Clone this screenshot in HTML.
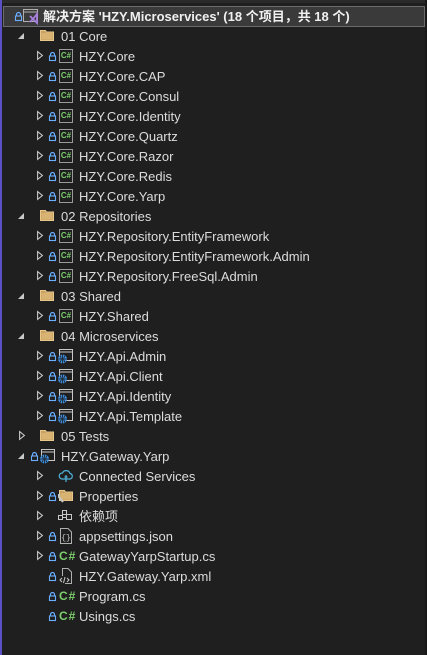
<!DOCTYPE html><html><head><meta charset="utf-8"><style>
body{margin:0;width:427px;height:655px;background:#1f1f1f;overflow:hidden;position:relative;font-family:"Segoe UI","Liberation Sans","Noto Sans CJK SC",sans-serif;font-size:13px;color:#dcdcdc}
svg{overflow:visible}
.lb{position:absolute;left:0;top:0;width:2px;height:655px;background:#5a4fc4}
.tb{position:absolute;left:2px;top:0;width:425px;height:3px;background:#2a2a2a}
.rb{position:absolute;right:0;top:0;width:2px;height:655px;background:#181818}
.r{position:absolute;left:0;height:20px;width:427px}
.sel{position:absolute;left:3px;top:6px;width:420px;height:19px;border:1px solid #6b6b6b;background:#3a3a3a}
.t{position:absolute;top:3px;white-space:nowrap;line-height:16px}
.ex{position:absolute;top:7px;width:0;height:0;border-left:6px solid transparent;border-bottom:6px solid #c8c8c8}
.co{position:absolute;top:5px;width:6px;height:9px}
.lk{position:absolute;top:6px;width:7px;height:9px}
.cs{position:absolute;top:3px;width:12px;height:12px;border:1px solid #9a9a9a;background:#1f1f1f;color:#7ccf6c;font-size:8px;font-weight:bold;line-height:12px;text-align:center;font-family:"Liberation Sans",sans-serif}
.fo{position:absolute;top:4px;width:14px;height:11px}
.wb{position:absolute;left:57px;top:2px;width:16px;height:16px}
.csn{position:absolute;top:3px;color:#7ccf6c;font-weight:bold;font-size:12px;font-family:"Liberation Sans",sans-serif;letter-spacing:1px}
</style></head><body>
<div class="lb"></div><div class="tb"></div><div class="rb"></div>
<div class="sel"></div>
<svg width="0" height="0" style="position:absolute"><defs>
<g id="lock"><path d="M1.5 4V2.5a2 2 0 0 1 4 0V4" fill="none" stroke="#6aaeff" stroke-width="1.2"/><rect x="0.5" y="4" width="6" height="4.5" fill="none" stroke="#6aaeff" stroke-width="1.1"/></g>
<g id="co"><path d="M0.6 0.6L5.4 4.5L0.6 8.4Z" fill="none" stroke="#c8c8c8" stroke-width="1.1"/></g>
<g id="fold"><path d="M0.5 0.5H5.5L6.5 2H13.5V10.5H0.5Z" fill="#c9a063" stroke="#e8c88c" stroke-width="1"/><rect x="1.5" y="3" width="11" height="6.5" fill="#d9b372"/></g>
<g id="web"><rect x="2.5" y="1.5" width="13" height="11" fill="#1f1f1f" stroke="#c8c8c8"/><line x1="2.5" y1="4" x2="15.5" y2="4" stroke="#c8c8c8"/><circle cx="5.5" cy="11" r="4.5" fill="#3b8ee0"/><path d="M1 11H10M5.5 6.5V15.5M3 7.5Q5.5 11 3 14.5M8 7.5Q5.5 11 8 14.5" stroke="#1f1f1f" stroke-width="0.8" fill="none"/></g>
</defs></svg>
<div class="r" style="top:6px"><svg class="lk" style="left:15px"><use href="#lock"/></svg>
<svg style="position:absolute;left:23px;top:2px" width="16" height="16" viewBox="0 0 16 16"><rect x="0.5" y="1.5" width="14" height="12" fill="none" stroke="#b0b0b0"/><line x1="0.5" y1="4" x2="14.5" y2="4" stroke="#b0b0b0"/><path d="M7 8L10 11L14 6V15L10 11L7 14" fill="none" stroke="#a77fe0" stroke-width="1.8"/></svg>
<span class="t" style="left:43px;font-weight:bold;color:#f0f0f0">解决方案 'HZY.Microservices' (18 个项目，共 18 个)</span></div>

<div class="r" style="top:26px"><span class="ex" style="left:18px"></span><svg class="fo" style="left:40px"><use href="#fold"/></svg><span class="t" style="left:61px">01 Core</span></div>
<div class="r" style="top:46px"><svg class="co" style="left:37px"><use href="#co"/></svg><svg class="lk" style="left:49px"><use href="#lock"/></svg><span class="cs" style="left:59px">C#</span><span class="t" style="left:79px">HZY.Core</span></div>
<div class="r" style="top:66px"><svg class="co" style="left:37px"><use href="#co"/></svg><svg class="lk" style="left:49px"><use href="#lock"/></svg><span class="cs" style="left:59px">C#</span><span class="t" style="left:79px">HZY.Core.CAP</span></div>
<div class="r" style="top:86px"><svg class="co" style="left:37px"><use href="#co"/></svg><svg class="lk" style="left:49px"><use href="#lock"/></svg><span class="cs" style="left:59px">C#</span><span class="t" style="left:79px">HZY.Core.Consul</span></div>
<div class="r" style="top:106px"><svg class="co" style="left:37px"><use href="#co"/></svg><svg class="lk" style="left:49px"><use href="#lock"/></svg><span class="cs" style="left:59px">C#</span><span class="t" style="left:79px">HZY.Core.Identity</span></div>
<div class="r" style="top:126px"><svg class="co" style="left:37px"><use href="#co"/></svg><svg class="lk" style="left:49px"><use href="#lock"/></svg><span class="cs" style="left:59px">C#</span><span class="t" style="left:79px">HZY.Core.Quartz</span></div>
<div class="r" style="top:146px"><svg class="co" style="left:37px"><use href="#co"/></svg><svg class="lk" style="left:49px"><use href="#lock"/></svg><span class="cs" style="left:59px">C#</span><span class="t" style="left:79px">HZY.Core.Razor</span></div>
<div class="r" style="top:166px"><svg class="co" style="left:37px"><use href="#co"/></svg><svg class="lk" style="left:49px"><use href="#lock"/></svg><span class="cs" style="left:59px">C#</span><span class="t" style="left:79px">HZY.Core.Redis</span></div>
<div class="r" style="top:186px"><svg class="co" style="left:37px"><use href="#co"/></svg><svg class="lk" style="left:49px"><use href="#lock"/></svg><span class="cs" style="left:59px">C#</span><span class="t" style="left:79px">HZY.Core.Yarp</span></div>

<div class="r" style="top:206px"><span class="ex" style="left:18px"></span><svg class="fo" style="left:40px"><use href="#fold"/></svg><span class="t" style="left:61px">02 Repositories</span></div>
<div class="r" style="top:226px"><svg class="co" style="left:37px"><use href="#co"/></svg><svg class="lk" style="left:49px"><use href="#lock"/></svg><span class="cs" style="left:59px">C#</span><span class="t" style="left:79px">HZY.Repository.EntityFramework</span></div>
<div class="r" style="top:246px"><svg class="co" style="left:37px"><use href="#co"/></svg><svg class="lk" style="left:49px"><use href="#lock"/></svg><span class="cs" style="left:59px">C#</span><span class="t" style="left:79px">HZY.Repository.EntityFramework.Admin</span></div>
<div class="r" style="top:266px"><svg class="co" style="left:37px"><use href="#co"/></svg><svg class="lk" style="left:49px"><use href="#lock"/></svg><span class="cs" style="left:59px">C#</span><span class="t" style="left:79px">HZY.Repository.FreeSql.Admin</span></div>

<div class="r" style="top:286px"><span class="ex" style="left:18px"></span><svg class="fo" style="left:40px"><use href="#fold"/></svg><span class="t" style="left:61px">03 Shared</span></div>
<div class="r" style="top:306px"><svg class="co" style="left:37px"><use href="#co"/></svg><svg class="lk" style="left:49px"><use href="#lock"/></svg><span class="cs" style="left:59px">C#</span><span class="t" style="left:79px">HZY.Shared</span></div>

<div class="r" style="top:326px"><span class="ex" style="left:18px"></span><svg class="fo" style="left:40px"><use href="#fold"/></svg><span class="t" style="left:61px">04 Microservices</span></div>
<div class="r" style="top:346px"><svg class="co" style="left:37px"><use href="#co"/></svg><svg class="lk" style="left:49px"><use href="#lock"/></svg><svg class="wb"><use href="#web"/></svg><span class="t" style="left:79px">HZY.Api.Admin</span></div>
<div class="r" style="top:366px"><svg class="co" style="left:37px"><use href="#co"/></svg><svg class="lk" style="left:49px"><use href="#lock"/></svg><svg class="wb"><use href="#web"/></svg><span class="t" style="left:79px">HZY.Api.Client</span></div>
<div class="r" style="top:386px"><svg class="co" style="left:37px"><use href="#co"/></svg><svg class="lk" style="left:49px"><use href="#lock"/></svg><svg class="wb"><use href="#web"/></svg><span class="t" style="left:79px">HZY.Api.Identity</span></div>
<div class="r" style="top:406px"><svg class="co" style="left:37px"><use href="#co"/></svg><svg class="lk" style="left:49px"><use href="#lock"/></svg><svg class="wb"><use href="#web"/></svg><span class="t" style="left:79px">HZY.Api.Template</span></div>

<div class="r" style="top:426px"><svg class="co" style="left:19px"><use href="#co"/></svg><svg class="fo" style="left:40px"><use href="#fold"/></svg><span class="t" style="left:61px">05 Tests</span></div>

<div class="r" style="top:446px"><span class="ex" style="left:18px"></span><svg class="lk" style="left:31px"><use href="#lock"/></svg><svg class="wb" style="left:39px"><use href="#web"/></svg><span class="t" style="left:61px">HZY.Gateway.Yarp</span></div>
<div class="r" style="top:466px"><svg class="co" style="left:37px"><use href="#co"/></svg><svg style="position:absolute;left:58px;top:3px" width="16" height="14" viewBox="0 0 16 14"><path d="M4 10A3 3 0 0 1 4.5 4A4 4 0 0 1 12 4.5A2.8 2.8 0 0 1 12 10Z" fill="none" stroke="#4fb3d9" stroke-width="1.2"/><path d="M8 6V13M6.5 8H9.5" stroke="#4fb3d9" stroke-width="1.2"/></svg><span class="t" style="left:79px">Connected Services</span></div>
<div class="r" style="top:486px"><svg class="co" style="left:37px"><use href="#co"/></svg><svg class="lk" style="left:49px"><use href="#lock"/></svg><svg class="fo" style="left:59px"><use href="#fold"/></svg><svg style="position:absolute;left:57px;top:7px" width="8" height="10" viewBox="0 0 8 10"><path d="M2 1L2 4L6 9" stroke="#c8c8c8" stroke-width="2" fill="none"/></svg><span class="t" style="left:79px">Properties</span></div>
<div class="r" style="top:506px"><svg class="co" style="left:37px"><use href="#co"/></svg><svg style="position:absolute;left:58px;top:3px" width="15" height="14" viewBox="0 0 15 14"><rect x="0.5" y="6.5" width="4" height="4" fill="none" stroke="#c8c8c8"/><rect x="8.5" y="5.5" width="5" height="5" fill="none" stroke="#c8c8c8"/><rect x="4.5" y="1.5" width="4" height="4" fill="none" stroke="#c8c8c8"/><line x1="4.5" y1="8.5" x2="8.5" y2="8.5" stroke="#c8c8c8"/></svg><span class="t" style="left:79px">依赖项</span></div>
<div class="r" style="top:526px"><svg class="co" style="left:37px"><use href="#co"/></svg><svg class="lk" style="left:49px"><use href="#lock"/></svg><svg style="position:absolute;left:60px;top:2px" width="12" height="16" viewBox="0 0 12 16"><path d="M0.5 0.5H8L11.5 4V15.5H0.5Z" fill="none" stroke="#b0b0b0"/><text x="6" y="12" font-size="8" fill="#c8c8c8" text-anchor="middle" font-family="Liberation Mono">{}</text></svg><span class="t" style="left:79px">appsettings.json</span></div>
<div class="r" style="top:546px"><svg class="co" style="left:37px"><use href="#co"/></svg><svg class="lk" style="left:49px"><use href="#lock"/></svg><span class="csn" style="left:59px">C#</span><span class="t" style="left:79px">GatewayYarpStartup.cs</span></div>
<div class="r" style="top:566px"><svg class="lk" style="left:49px"><use href="#lock"/></svg><svg style="position:absolute;left:59px;top:2px" width="13" height="16" viewBox="0 0 13 16"><path d="M3.5 8V0.5H9L12.5 4V15.5H6" fill="none" stroke="#b0b0b0"/><path d="M3 10L1 12L3 14M6 9L4.5 15M8 10L10 12L8 14" fill="none" stroke="#c8c8c8"/></svg><span class="t" style="left:79px">HZY.Gateway.Yarp.xml</span></div>
<div class="r" style="top:586px"><svg class="lk" style="left:49px"><use href="#lock"/></svg><span class="csn" style="left:59px">C#</span><span class="t" style="left:79px">Program.cs</span></div>
<div class="r" style="top:606px"><svg class="lk" style="left:49px"><use href="#lock"/></svg><span class="csn" style="left:59px">C#</span><span class="t" style="left:79px">Usings.cs</span></div>
</body></html>
